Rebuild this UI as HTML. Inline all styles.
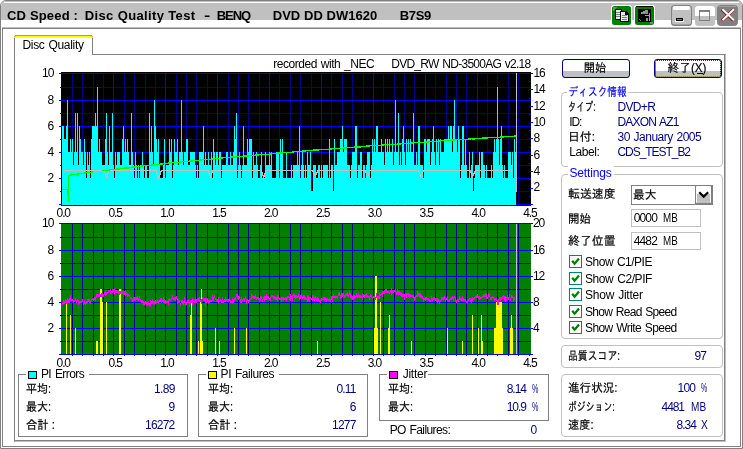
<!DOCTYPE html>
<html lang="ja"><head><meta charset="utf-8"><title>CD Speed : Disc Quality Test</title>
<style>
html,body{margin:0;padding:0;background:#fff;overflow:hidden}
body{width:743px;height:449px;position:relative;font-family:"Liberation Sans","IPAGothic",sans-serif;font-size:12px}
.abs{position:absolute;display:block}
.t{position:absolute;white-space:pre;font-family:"Liberation Sans","IPAGothic",sans-serif}
#tx{position:absolute;left:0;top:0;width:743px;height:449px;will-change:transform;opacity:.999}
</style></head><body>
<div class="abs" style="left:0;top:0;width:743px;height:449px;background:#fff"></div>
<div class="abs" style="left:0;top:0;width:741px;height:447px;border:1px solid #808080;border-radius:6px 6px 0 0;background:#fff"></div>
<div class="abs" style="left:1px;top:1px;width:741px;height:19px;background:#c0c0c0;border-radius:5px 5px 0 0"></div>
<div class="abs" style="left:4px;top:2px;width:735px;height:1px;background:#fff"></div>
<div class="abs" style="left:2px;top:27px;width:739px;height:1px;background:#c0c0c0"></div>
<div class="abs" style="left:2px;top:28px;width:737px;height:417px;border:1px solid #808080"></div>

<svg class="abs" style="left:610px;top:4px" width="46" height="23" viewBox="610 4 46 23" shape-rendering="crispEdges">
<rect x="611" y="5" width="21" height="21" rx="3" fill="#fff" shape-rendering="auto"/>
<rect x="612" y="6" width="19" height="19" rx="2.500" fill="#008000" shape-rendering="auto"/>
<path d="M613 7h4l-4 4z" fill="#808080"/>
<rect x="615" y="9" width="7" height="11" fill="#000"/>
<rect x="616" y="10" width="5" height="9" fill="#e8e8e8"/>
<path d="M616 12h5M616 14h5M616 16h5" stroke="#808080" transform="translate(0,.5)"/>
<path d="M620 11h6l3 3v8h-9z" fill="#000"/>
<path d="M621 12h4v3h3v6h-7z" fill="#e8e8e8"/>
<path d="M622 15h5M622 17h5M622 19h5" stroke="#808080" transform="translate(0,.5)"/>
<rect x="634" y="5" width="21" height="21" rx="3" fill="#fff" shape-rendering="auto"/>
<rect x="635" y="6" width="19" height="19" rx="2.500" fill="#008000" shape-rendering="auto"/>
<rect x="636" y="6" width="17" height="1" fill="#000"/>
<rect x="638" y="9" width="13" height="13" fill="#000"/>
<path d="M641 12h2v-1h2v-1h3v4h-7z" fill="#909090"/>
<rect x="649" y="13" width="1" height="8" fill="#a0a0a0"/>
<rect x="645" y="15" width="4" height="1" fill="#a0a0a0"/>
<rect x="646" y="18" width="2" height="3" fill="#909090"/>
<path d="M639 19h1v1h1v1h-1v-1h-1z" fill="#808080"/>
<path d="M650 22h3v2h-3z" fill="#808080"/>
</svg>
<svg class="abs" style="left:668px;top:3px" width="73" height="25" viewBox="668 3 73 25">
<rect x="671" y="5" width="21" height="21" rx="3.500" fill="#808080"/>
<rect x="672" y="6" width="19" height="18.500" rx="2.500" fill="#c0c0c0"/>
<path d="M673 9v-1.500q0-1.500 1.500-1.500h14q1.500 0 1.500 1.500v1.500l-1 1h-15z" fill="#fff"/>
<rect x="675" y="20" width="9" height="2" fill="#fff"/>
<rect x="676" y="18" width="7" height="3" fill="#000"/>
<rect x="677" y="19" width="5" height="1" fill="#808080"/>
<rect x="695" y="6" width="20" height="20" rx="3" fill="#c0c0c0"/>
<path d="M695 16v-7q0-3 3-3h14q3 0 3 3v7z" fill="#fff"/>
<rect x="699.500" y="10.500" width="10" height="10" fill="#fff" stroke="#808080"/>
<rect x="699" y="10" width="11" height="2" fill="#808080"/>
<rect x="700" y="16" width="9" height="4" fill="#c0c0c0"/>
<rect x="717.500" y="5.500" width="20" height="20" rx="3" fill="#808080" stroke="#808080"/>
<rect x="719" y="6" width="17" height="1" fill="#a0a0a0"/>
<path d="M722 9.500l11.500 11M733.500 9.500l-11.500 11" stroke="#800000" stroke-width="3"/>
<path d="M722.400 9.200l11.500 11M733.900 9.200l-11.500 11" stroke="#fff" stroke-width="2"/>
</svg>
<div class="abs" style="left:14px;top:54px;width:712px;height:388px;box-sizing:border-box;border:1px solid #c0c0c0;border-top-color:#808080;border-left-color:#808080"></div>
<div class="abs" style="left:14px;top:54px;width:711px;height:387px;box-sizing:border-box;border:1px solid #808080"></div>
<div class="abs" style="left:14px;top:35px;width:79px;height:20px;box-sizing:border-box;border:1px solid #808080;border-bottom:none;border-radius:3px 3px 0 0;background:#fff"></div>
<div class="abs" style="left:14px;top:35px;width:79px;height:3px;background:#ffff00;border-radius:3px 3px 0 0;border-top:1px solid #c0a000;box-sizing:border-box"></div>

<svg class="abs" style="left:0;top:0" width="743" height="449" viewBox="0 0 743 449" shape-rendering="crispEdges"><rect x="61" y="72" width="470" height="134" fill="#000"/>
<path d="M72.5 73V205" stroke="#000090"/>
<path d="M82.5 73V205" stroke="#000090"/>
<path d="M93.5 73V205" stroke="#000090"/>
<path d="M103.5 73V205" stroke="#000090"/>
<path d="M113.5 73V205" stroke="#0000ff"/>
<path d="M124.5 73V205" stroke="#000090"/>
<path d="M134.5 73V205" stroke="#000090"/>
<path d="M145.5 73V205" stroke="#000090"/>
<path d="M155.5 73V205" stroke="#000090"/>
<path d="M165.5 73V205" stroke="#0000ff"/>
<path d="M176.5 73V205" stroke="#000090"/>
<path d="M186.5 73V205" stroke="#000090"/>
<path d="M196.5 73V205" stroke="#000090"/>
<path d="M207.5 73V205" stroke="#000090"/>
<path d="M217.5 73V205" stroke="#0000ff"/>
<path d="M228.5 73V205" stroke="#000090"/>
<path d="M238.5 73V205" stroke="#000090"/>
<path d="M248.5 73V205" stroke="#000090"/>
<path d="M259.5 73V205" stroke="#000090"/>
<path d="M269.5 73V205" stroke="#0000ff"/>
<path d="M279.5 73V205" stroke="#000090"/>
<path d="M290.5 73V205" stroke="#000090"/>
<path d="M300.5 73V205" stroke="#000090"/>
<path d="M311.5 73V205" stroke="#000090"/>
<path d="M321.5 73V205" stroke="#0000ff"/>
<path d="M331.5 73V205" stroke="#000090"/>
<path d="M342.5 73V205" stroke="#000090"/>
<path d="M352.5 73V205" stroke="#000090"/>
<path d="M363.5 73V205" stroke="#000090"/>
<path d="M373.5 73V205" stroke="#0000ff"/>
<path d="M383.5 73V205" stroke="#000090"/>
<path d="M394.5 73V205" stroke="#000090"/>
<path d="M404.5 73V205" stroke="#000090"/>
<path d="M414.5 73V205" stroke="#000090"/>
<path d="M425.5 73V205" stroke="#0000ff"/>
<path d="M435.5 73V205" stroke="#000090"/>
<path d="M446.5 73V205" stroke="#000090"/>
<path d="M456.5 73V205" stroke="#000090"/>
<path d="M466.5 73V205" stroke="#000090"/>
<path d="M477.5 73V205" stroke="#0000ff"/>
<path d="M487.5 73V205" stroke="#000090"/>
<path d="M497.5 73V205" stroke="#000090"/>
<path d="M508.5 73V205" stroke="#000090"/>
<path d="M518.5 73V205" stroke="#000090"/>
<path d="M59 204.5H531" stroke="#0000ff"/>
<path d="M60 191.5H531" stroke="#000090"/>
<path d="M59 178.5H531" stroke="#0000ff"/>
<path d="M60 165.5H531" stroke="#000090"/>
<path d="M59 152.5H531" stroke="#0000ff"/>
<path d="M60 139.5H531" stroke="#000090"/>
<path d="M59 126.5H531" stroke="#0000ff"/>
<path d="M60 113.5H531" stroke="#000090"/>
<path d="M59 100.5H531" stroke="#0000ff"/>
<path d="M60 87.5H531" stroke="#000090"/>
<path d="M59 73.5H531" stroke="#0000ff"/>
<path d="M62 126H64V205H62zM64 139H66V205H64zM66 126H67V205H66zM67 100H68V205H67zM68 152H70V205H68zM70 139H71V205H70zM71 152H72V205H71zM72 139H73V205H72zM73 165H74V205H73zM74 152H75V205H74zM75 113H76V205H75zM76 152H77V205H76zM77 113H78V205H77zM78 165H79V205H78zM79 126H80V205H79zM80 139H81V205H80zM81 152H83V205H81zM83 165H84V205H83zM84 139H85V205H84zM85 152H86V205H85zM86 178H87V205H86zM87 152H88V205H87zM88 165H89V205H88zM89 152H90V205H89zM90 178H91V205H90zM91 139H92V205H91zM92 126H95V205H92zM95 113H96V205H95zM96 126H97V205H96zM97 87H98V205H97zM98 152H99V205H98zM99 139H100V205H99zM100 152H102V205H100zM102 165H105V205H102zM105 139H106V205H105zM106 113H107V205H106zM107 152H108V205H107zM108 165H109V205H108zM109 126H110V205H109zM110 152H112V205H110zM112 113H113V205H112zM113 165H114V205H113zM114 178H115V205H114zM115 152H116V205H115zM116 165H117V205H116zM117 152H120V205H117zM120 165H122V205H120zM122 139H123V205H122zM123 126H124V205H123zM124 152H125V205H124zM125 139H126V205H125zM126 152H127V205H126zM127 139H128V205H127zM128 152H129V205H128zM129 165H131V205H129zM131 113H132V205H131zM132 152H133V205H132zM133 165H134V205H133zM134 178H135V205H134zM135 152H136V205H135zM136 165H137V205H136zM137 178H138V205H137zM138 165H139V205H138zM139 178H140V205H139zM140 165H142V205H140zM142 152H143V205H142zM143 165H144V205H143zM144 178H145V205H144zM145 165H147V205H145zM147 178H149V205H147zM149 113H150V205H149zM150 152H151V205H150zM151 126H152V205H151zM152 152H153V205H152zM153 165H154V205H153zM154 100H155V205H154zM155 126H156V205H155zM156 139H157V205H156zM157 152H158V205H157zM158 139H159V205H158zM159 165H160V205H159zM160 178H163V205H160zM163 165H164V205H163zM164 139H165V205H164zM165 178H166V205H165zM166 165H169V205H166zM169 139H170V205H169zM170 152H171V205H170zM171 139H172V205H171zM172 178H173V205H172zM173 165H174V205H173zM174 139H175V205H174zM175 152H177V205H175zM177 139H178V205H177zM178 165H179V205H178zM179 152H181V205H179zM181 100H182V205H181zM182 152H183V205H182zM183 165H184V205H183zM184 152H186V205H184zM186 139H188V205H186zM188 165H190V205H188zM190 152H195V205H190zM195 165H196V205H195zM196 178H197V205H196zM197 165H198V205H197zM198 178H199V205H198zM199 152H203V205H199zM203 126H204V205H203zM204 165H205V205H204zM205 152H206V205H205zM206 165H208V205H206zM208 152H209V205H208zM209 165H211V205H209zM211 152H212V205H211zM212 178H213V205H212zM213 139H214V205H213zM214 152H215V205H214zM215 165H216V205H215zM216 152H218V205H216zM218 165H219V205H218zM219 152H221V205H219zM221 178H222V205H221zM222 165H226V205H222zM226 152H228V205H226zM228 165H230V205H228zM230 152H231V205H230zM231 165H233V205H231zM233 152H234V205H233zM234 126H235V205H234zM235 139H236V205H235zM236 113H237V205H236zM237 178H238V205H237zM238 165H239V205H238zM239 152H240V205H239zM240 165H241V205H240zM241 178H242V205H241zM242 165H243V205H242zM243 126H244V205H243zM244 165H247V205H244zM247 139H248V205H247zM248 152H249V205H248zM249 139H252V205H249zM252 178H253V205H252zM253 152H254V205H253zM254 165H256V205H254zM256 152H257V205H256zM257 165H258V205H257zM258 178H260V205H258zM260 165H261V205H260zM261 152H262V205H261zM262 178H265V205H262zM265 152H266V205H265zM266 165H269V205H266zM269 152H270V205H269zM270 165H271V205H270zM271 152H272V205H271zM272 178H276V205H272zM276 152H279V205H276zM279 178H280V205H279zM280 139H281V205H280zM281 152H282V205H281zM282 139H283V205H282zM283 178H286V205H283zM286 152H287V205H286zM287 178H291V205H287zM291 165H292V205H291zM292 178H293V205H292zM293 165H297V205H293zM297 152H298V205H297zM298 165H299V205H298zM299 126H300V205H299zM300 178H301V205H300zM301 165H302V205H301zM302 152H303V205H302zM303 165H304V205H303zM304 178H305V205H304zM305 165H306V205H305zM306 178H307V205H306zM307 152H308V205H307zM308 165H310V205H308zM310 152H311V205H310zM311 191H313V205H311zM313 165H316V205H313zM316 178H318V205H316zM318 165H320V205H318zM320 178H321V205H320zM321 165H322V205H321zM322 178H323V205H322zM323 165H328V205H323zM328 178H329V205H328zM329 139H330V205H329zM330 178H331V205H330zM331 165H333V205H331zM333 191H334V205H333zM334 139H335V205H334zM335 165H337V205H335zM337 152H340V205H337zM340 139H342V205H340zM342 126H343V205H342zM343 152H344V205H343zM344 139H347V205H344zM347 165H350V205H347zM350 178H351V205H350zM351 165H352V205H351zM352 152H355V205H352zM355 126H357V205H355zM357 178H358V205H357zM358 165H360V205H358zM360 152H362V205H360zM362 178H363V205H362zM363 165H365V205H363zM365 178H366V205H365zM366 165H367V205H366zM367 152H370V205H367zM370 178H371V205H370zM371 165H372V205H371zM372 139H373V205H372zM373 152H374V205H373zM374 139H375V205H374zM375 152H376V205H375zM376 126H378V205H376zM378 152H381V205H378zM381 139H382V205H381zM382 152H384V205H382zM384 165H385V205H384zM385 139H386V205H385zM386 152H387V205H386zM387 139H388V205H387zM388 152H389V205H388zM389 139H390V205H389zM390 152H392V205H390zM392 139H393V205H392zM393 165H394V205H393zM394 152H395V205H394zM395 100H396V205H395zM396 152H398V205H396zM398 113H399V205H398zM399 165H400V205H399zM400 152H401V205H400zM401 165H402V205H401zM402 139H403V205H402zM403 126H404V205H403zM404 152H405V205H404zM405 165H406V205H405zM406 139H407V205H406zM407 152H408V205H407zM408 139H409V205H408zM409 152H410V205H409zM410 139H411V205H410zM411 152H413V205H411zM413 113H414V205H413zM414 165H416V205H414zM416 152H417V205H416zM417 165H418V205H417zM418 126H420V205H418zM420 165H423V205H420zM423 178H424V205H423zM424 139H426V205H424zM426 152H427V205H426zM427 139H430V205H427zM430 165H431V205H430zM431 152H432V205H431zM432 139H433V205H432zM433 126H434V205H433zM434 152H435V205H434zM435 165H436V205H435zM436 139H437V205H436zM437 152H438V205H437zM438 139H439V205H438zM439 165H440V205H439zM440 139H441V205H440zM441 152H444V205H441zM444 139H448V205H444zM448 126H449V205H448zM449 139H450V205H449zM450 126H452V205H450zM452 152H453V205H452zM453 126H454V205H453zM454 100H455V205H454zM455 139H457V205H455zM457 152H458V205H457zM458 126H459V205H458zM459 139H460V205H459zM460 178H461V205H460zM461 165H462V205H461zM462 126H464V205H462zM464 165H465V205H464zM465 139H466V205H465zM466 165H467V205H466zM467 178H469V205H467zM469 152H470V205H469zM470 178H471V205H470zM471 165H472V205H471zM472 152H473V205H472zM473 191H474V205H473zM474 178H475V205H474zM475 165H479V205H475zM479 152H480V205H479zM480 178H481V205H480zM481 152H483V205H481zM483 165H485V205H483zM485 178H486V205H485zM486 165H487V205H486zM487 178H491V205H487zM491 165H492V205H491zM492 178H493V205H492zM493 152H494V205H493zM494 139H495V205H494zM495 152H496V205H495zM496 139H497V205H496zM497 87H498V205H497zM498 139H499V205H498zM499 165H500V205H499zM500 139H501V205H500zM501 126H502V205H501zM502 165H503V205H502zM503 178H504V205H503zM504 165H505V205H504zM505 178H508V205H505zM508 152H511V205H508zM511 165H512V205H511zM512 152H513V205H512zM513 178H514V205H513zM514 139H515V205H514zM515 152H516V205H515z" fill="#00ffff"/>
<path d="M61.5 72V206M61 205.5H531" stroke="#000"/>
<rect x="62" y="205" width="1" height="1" fill="#0000ff"/>
<rect x="72" y="205" width="1" height="1" fill="#0000ff"/>
<rect x="82" y="205" width="1" height="1" fill="#0000ff"/>
<rect x="93" y="205" width="1" height="1" fill="#0000ff"/>
<rect x="103" y="205" width="1" height="1" fill="#0000ff"/>
<rect x="113" y="205" width="1" height="1" fill="#0000ff"/>
<rect x="124" y="205" width="1" height="1" fill="#0000ff"/>
<rect x="134" y="205" width="1" height="1" fill="#0000ff"/>
<rect x="145" y="205" width="1" height="1" fill="#0000ff"/>
<rect x="155" y="205" width="1" height="1" fill="#0000ff"/>
<rect x="165" y="205" width="1" height="1" fill="#0000ff"/>
<rect x="176" y="205" width="1" height="1" fill="#0000ff"/>
<rect x="186" y="205" width="1" height="1" fill="#0000ff"/>
<rect x="196" y="205" width="1" height="1" fill="#0000ff"/>
<rect x="207" y="205" width="1" height="1" fill="#0000ff"/>
<rect x="217" y="205" width="1" height="1" fill="#0000ff"/>
<rect x="228" y="205" width="1" height="1" fill="#0000ff"/>
<rect x="238" y="205" width="1" height="1" fill="#0000ff"/>
<rect x="248" y="205" width="1" height="1" fill="#0000ff"/>
<rect x="259" y="205" width="1" height="1" fill="#0000ff"/>
<rect x="269" y="205" width="1" height="1" fill="#0000ff"/>
<rect x="279" y="205" width="1" height="1" fill="#0000ff"/>
<rect x="290" y="205" width="1" height="1" fill="#0000ff"/>
<rect x="300" y="205" width="1" height="1" fill="#0000ff"/>
<rect x="311" y="205" width="1" height="1" fill="#0000ff"/>
<rect x="321" y="205" width="1" height="1" fill="#0000ff"/>
<rect x="331" y="205" width="1" height="1" fill="#0000ff"/>
<rect x="342" y="205" width="1" height="1" fill="#0000ff"/>
<rect x="352" y="205" width="1" height="1" fill="#0000ff"/>
<rect x="363" y="205" width="1" height="1" fill="#0000ff"/>
<rect x="373" y="205" width="1" height="1" fill="#0000ff"/>
<rect x="383" y="205" width="1" height="1" fill="#0000ff"/>
<rect x="394" y="205" width="1" height="1" fill="#0000ff"/>
<rect x="404" y="205" width="1" height="1" fill="#0000ff"/>
<rect x="414" y="205" width="1" height="1" fill="#0000ff"/>
<rect x="425" y="205" width="1" height="1" fill="#0000ff"/>
<rect x="435" y="205" width="1" height="1" fill="#0000ff"/>
<rect x="446" y="205" width="1" height="1" fill="#0000ff"/>
<rect x="456" y="205" width="1" height="1" fill="#0000ff"/>
<rect x="466" y="205" width="1" height="1" fill="#0000ff"/>
<rect x="477" y="205" width="1" height="1" fill="#0000ff"/>
<rect x="487" y="205" width="1" height="1" fill="#0000ff"/>
<rect x="497" y="205" width="1" height="1" fill="#0000ff"/>
<rect x="508" y="205" width="1" height="1" fill="#0000ff"/>
<rect x="518" y="205" width="1" height="1" fill="#0000ff"/>
<rect x="529" y="205" width="1" height="1" fill="#0000ff"/>
<rect x="59" y="204" width="3" height="1" fill="#0000ff"/>
<rect x="60" y="191" width="2" height="1" fill="#0000ff"/>
<rect x="59" y="178" width="3" height="1" fill="#0000ff"/>
<rect x="60" y="165" width="2" height="1" fill="#0000ff"/>
<rect x="59" y="152" width="3" height="1" fill="#0000ff"/>
<rect x="60" y="139" width="2" height="1" fill="#0000ff"/>
<rect x="59" y="126" width="3" height="1" fill="#0000ff"/>
<rect x="60" y="113" width="2" height="1" fill="#0000ff"/>
<rect x="59" y="100" width="3" height="1" fill="#0000ff"/>
<rect x="60" y="87" width="2" height="1" fill="#0000ff"/>
<rect x="59" y="73" width="3" height="1" fill="#0000ff"/>
<rect x="529" y="204" width="4" height="1" fill="#0000ff"/>
<rect x="529" y="196" width="2" height="1" fill="#0000ff"/>
<rect x="529" y="188" width="4" height="1" fill="#0000ff"/>
<rect x="529" y="179" width="2" height="1" fill="#0000ff"/>
<rect x="529" y="171" width="4" height="1" fill="#0000ff"/>
<rect x="529" y="163" width="2" height="1" fill="#0000ff"/>
<rect x="529" y="155" width="4" height="1" fill="#0000ff"/>
<rect x="529" y="147" width="2" height="1" fill="#0000ff"/>
<rect x="529" y="138" width="4" height="1" fill="#0000ff"/>
<rect x="529" y="130" width="2" height="1" fill="#0000ff"/>
<rect x="529" y="122" width="4" height="1" fill="#0000ff"/>
<rect x="529" y="114" width="2" height="1" fill="#0000ff"/>
<rect x="529" y="106" width="4" height="1" fill="#0000ff"/>
<rect x="529" y="98" width="2" height="1" fill="#0000ff"/>
<rect x="529" y="89" width="4" height="1" fill="#0000ff"/>
<rect x="529" y="81" width="2" height="1" fill="#0000ff"/>
<rect x="529" y="73" width="4" height="1" fill="#0000ff"/>
<polyline fill="none" stroke="#c0c0c0" stroke-width="1.2" points="63.5,170.5 104.1,170.5 106.6,177.5 109.1,170.5 156.2,170.5 158.7,178.5 161.2,170.5 207.9,170.5 210.4,176.5 212.9,170.5 261.2,170.5 263.7,177.5 266.2,170.5 312.7,170.5 315.2,176.5 317.7,170.5 365.1,170.5 367.6,176.5 370.1,170.5 418.5,170.5 421.0,176.5 423.5,170.5 470.3,170.5 472.8,176.5 475.3,170.5 512.0,170.5"/>
<polyline fill="none" stroke="#00ff00" stroke-width="1.3" points="62.0,189.5 67.5,189.5 68.0,194.0 68.5,200.5 68.6,175.5 69.0,175.3 72.0,174.8 75.0,174.6 78.0,173.9 81.0,173.7 84.0,173.2 87.0,172.6 90.0,172.5 93.0,171.8"/>
<polyline fill="none" stroke="#00ff00" stroke-width="1.3" points="102.0,170.7 105.0,170.5 108.0,170.3 111.0,169.6 114.0,169.3 117.0,169.1 120.0,168.9 123.0,168.4 126.0,167.9 129.0,167.9 132.0,167.1 135.0,167.1 138.0,166.5 141.0,166.1 144.0,165.8 147.0,165.5 150.0,165.4 153.0,164.8 156.0,164.7 159.0,164.4 162.0,163.9 165.0,163.7 168.0,163.2 171.0,162.8 174.0,162.6 177.0,162.5 180.0,162.1 183.0,161.8 186.0,161.6 189.0,161.2 192.0,160.9 195.0,160.8 198.0,160.5 201.0,159.9 204.0,159.8 207.0,159.5 210.0,159.4 213.0,159.1 216.0,158.5 219.0,158.6 222.0,157.9 225.0,157.8 228.0,157.7 231.0,157.1 234.0,157.0 237.0,156.5 240.0,156.6 243.0,156.3 246.0,156.0 249.0,155.9 252.0,155.3 255.0,155.2 258.0,154.9 261.0,154.7 264.0,154.4 267.0,154.3 270.0,154.1 273.0,153.6 276.0,153.4 279.0,152.9 282.0,153.0 285.0,152.7 288.0,152.6 291.0,152.3 294.0,151.8 297.0,151.6 300.0,151.5 303.0,150.9 306.0,150.9 309.0,150.5 312.0,150.2 315.0,150.0 318.0,150.1 321.0,149.5 324.0,149.4 327.0,149.2 330.0,149.2 333.0,148.6 336.0,148.5 339.0,148.4 342.0,148.3 345.0,148.0 348.0,147.8 351.0,147.3 354.0,147.2 357.0,146.9 360.0,146.9 363.0,146.8 366.0,146.1 369.0,145.9 372.0,145.7 375.0,145.5 378.0,145.4 381.0,145.3 384.0,144.9 387.0,144.5 390.0,144.5 393.0,144.3 396.0,144.2 399.0,144.1 402.0,143.8 405.0,143.5 408.0,143.3 411.0,143.2 414.0,142.6 417.0,142.9 420.0,142.6 423.0,142.4 426.0,142.2 429.0,141.8 432.0,141.6 435.0,141.2 438.0,141.3 441.0,140.8 444.0,140.6 447.0,140.5 450.0,140.2 453.0,140.1 456.0,139.8 459.0,139.6 462.0,139.4 465.0,139.2 468.0,139.2 471.0,138.8 474.0,139.0 477.0,138.7 480.0,138.3 483.0,138.1 486.0,138.0 489.0,137.8 492.0,137.5 495.0,137.6 498.0,137.5 501.0,137.1 504.0,136.9 507.0,136.5 510.0,136.3 513.0,136.2 516.0,136.0"/>
<rect x="516" y="73" width="1" height="119" fill="#c0c0c0"/></svg>
<svg class="abs" style="left:0;top:0" width="743" height="449" viewBox="0 0 743 449" shape-rendering="crispEdges"><rect x="61" y="223" width="470" height="132" fill="#008000"/>
<path d="M72.5 223V355" stroke="#000090"/>
<path d="M82.5 223V355" stroke="#000090"/>
<path d="M93.5 223V355" stroke="#000090"/>
<path d="M103.5 223V355" stroke="#000090"/>
<path d="M113.5 223V355" stroke="#0000ff"/>
<path d="M124.5 223V355" stroke="#000090"/>
<path d="M134.5 223V355" stroke="#000090"/>
<path d="M145.5 223V355" stroke="#000090"/>
<path d="M155.5 223V355" stroke="#000090"/>
<path d="M165.5 223V355" stroke="#0000ff"/>
<path d="M176.5 223V355" stroke="#000090"/>
<path d="M186.5 223V355" stroke="#000090"/>
<path d="M196.5 223V355" stroke="#000090"/>
<path d="M207.5 223V355" stroke="#000090"/>
<path d="M217.5 223V355" stroke="#0000ff"/>
<path d="M228.5 223V355" stroke="#000090"/>
<path d="M238.5 223V355" stroke="#000090"/>
<path d="M248.5 223V355" stroke="#000090"/>
<path d="M259.5 223V355" stroke="#000090"/>
<path d="M269.5 223V355" stroke="#0000ff"/>
<path d="M279.5 223V355" stroke="#000090"/>
<path d="M290.5 223V355" stroke="#000090"/>
<path d="M300.5 223V355" stroke="#000090"/>
<path d="M311.5 223V355" stroke="#000090"/>
<path d="M321.5 223V355" stroke="#0000ff"/>
<path d="M331.5 223V355" stroke="#000090"/>
<path d="M342.5 223V355" stroke="#000090"/>
<path d="M352.5 223V355" stroke="#000090"/>
<path d="M363.5 223V355" stroke="#000090"/>
<path d="M373.5 223V355" stroke="#0000ff"/>
<path d="M383.5 223V355" stroke="#000090"/>
<path d="M394.5 223V355" stroke="#000090"/>
<path d="M404.5 223V355" stroke="#000090"/>
<path d="M414.5 223V355" stroke="#000090"/>
<path d="M425.5 223V355" stroke="#0000ff"/>
<path d="M435.5 223V355" stroke="#000090"/>
<path d="M446.5 223V355" stroke="#000090"/>
<path d="M456.5 223V355" stroke="#000090"/>
<path d="M466.5 223V355" stroke="#000090"/>
<path d="M477.5 223V355" stroke="#0000ff"/>
<path d="M487.5 223V355" stroke="#000090"/>
<path d="M497.5 223V355" stroke="#000090"/>
<path d="M508.5 223V355" stroke="#000090"/>
<path d="M518.5 223V355" stroke="#000090"/>
<path d="M59 354.5H531" stroke="#0000ff"/>
<path d="M60 341.5H531" stroke="#000090"/>
<path d="M59 328.5H531" stroke="#0000ff"/>
<path d="M60 315.5H531" stroke="#000090"/>
<path d="M59 302.5H531" stroke="#0000ff"/>
<path d="M60 289.5H531" stroke="#000090"/>
<path d="M59 276.5H531" stroke="#0000ff"/>
<path d="M60 263.5H531" stroke="#000090"/>
<path d="M59 250.5H531" stroke="#0000ff"/>
<path d="M60 237.5H531" stroke="#000090"/>
<path d="M59 223.5H531" stroke="#0000ff"/>
<rect x="529" y="354" width="4" height="1" fill="#0000ff"/>
<rect x="529" y="341" width="2" height="1" fill="#0000ff"/>
<rect x="529" y="328" width="4" height="1" fill="#0000ff"/>
<rect x="529" y="315" width="2" height="1" fill="#0000ff"/>
<rect x="529" y="302" width="4" height="1" fill="#0000ff"/>
<rect x="529" y="289" width="2" height="1" fill="#0000ff"/>
<rect x="529" y="276" width="4" height="1" fill="#0000ff"/>
<rect x="529" y="263" width="2" height="1" fill="#0000ff"/>
<rect x="529" y="250" width="4" height="1" fill="#0000ff"/>
<rect x="529" y="237" width="2" height="1" fill="#0000ff"/>
<rect x="529" y="223" width="4" height="1" fill="#0000ff"/>
<path d="M66 302h1V354h-1zM70 315h1V354h-1zM75 328h1V354h-1zM96 341h1V354h-1zM97 341h1V354h-1zM100 289h1V354h-1zM101 289h1V354h-1zM102 302h1V354h-1zM106 302h1V354h-1zM119 289h1V354h-1zM120 289h1V354h-1zM190 315h1V354h-1zM191 302h1V354h-1zM198 341h1V354h-1zM200 302h1V354h-1zM201 289h1V354h-1zM202 341h1V354h-1zM215 328h1V354h-1zM219 341h1V354h-1zM234 328h1V354h-1zM246 328h1V354h-1zM317 341h1V354h-1zM374 328h1V354h-1zM375 276h1V354h-1zM376 276h1V354h-1zM377 328h1V354h-1zM380 302h1V354h-1zM388 328h1V354h-1zM389 315h1V354h-1zM411 341h1V354h-1zM447 328h1V354h-1zM462 341h1V354h-1zM472 315h1V354h-1zM478 328h1V354h-1zM481 315h1V354h-1zM482 341h1V354h-1zM494 328h1V354h-1zM495 328h1V354h-1zM496 302h1V354h-1zM497 302h1V354h-1zM498 302h1V354h-1zM499 302h1V354h-1zM500 302h1V354h-1zM501 302h1V354h-1zM502 328h1V354h-1zM510 328h1V354h-1zM511 315h1V354h-1zM512 328h1V354h-1z" fill="#ffff00"/>
<rect x="516" y="224" width="1" height="130" fill="#c0c0c0"/>
<rect x="72" y="355" width="1" height="1" fill="#000090"/>
<rect x="82" y="355" width="1" height="1" fill="#000090"/>
<rect x="93" y="355" width="1" height="1" fill="#000090"/>
<rect x="103" y="355" width="1" height="1" fill="#000090"/>
<rect x="113" y="355" width="1" height="1" fill="#0000ff"/>
<rect x="124" y="355" width="1" height="1" fill="#000090"/>
<rect x="134" y="355" width="1" height="1" fill="#000090"/>
<rect x="145" y="355" width="1" height="1" fill="#000090"/>
<rect x="155" y="355" width="1" height="1" fill="#000090"/>
<rect x="165" y="355" width="1" height="1" fill="#0000ff"/>
<rect x="176" y="355" width="1" height="1" fill="#000090"/>
<rect x="186" y="355" width="1" height="1" fill="#000090"/>
<rect x="196" y="355" width="1" height="1" fill="#000090"/>
<rect x="207" y="355" width="1" height="1" fill="#000090"/>
<rect x="217" y="355" width="1" height="1" fill="#0000ff"/>
<rect x="228" y="355" width="1" height="1" fill="#000090"/>
<rect x="238" y="355" width="1" height="1" fill="#000090"/>
<rect x="248" y="355" width="1" height="1" fill="#000090"/>
<rect x="259" y="355" width="1" height="1" fill="#000090"/>
<rect x="269" y="355" width="1" height="1" fill="#0000ff"/>
<rect x="279" y="355" width="1" height="1" fill="#000090"/>
<rect x="290" y="355" width="1" height="1" fill="#000090"/>
<rect x="300" y="355" width="1" height="1" fill="#000090"/>
<rect x="311" y="355" width="1" height="1" fill="#000090"/>
<rect x="321" y="355" width="1" height="1" fill="#0000ff"/>
<rect x="331" y="355" width="1" height="1" fill="#000090"/>
<rect x="342" y="355" width="1" height="1" fill="#000090"/>
<rect x="352" y="355" width="1" height="1" fill="#000090"/>
<rect x="363" y="355" width="1" height="1" fill="#000090"/>
<rect x="373" y="355" width="1" height="1" fill="#0000ff"/>
<rect x="383" y="355" width="1" height="1" fill="#000090"/>
<rect x="394" y="355" width="1" height="1" fill="#000090"/>
<rect x="404" y="355" width="1" height="1" fill="#000090"/>
<rect x="414" y="355" width="1" height="1" fill="#000090"/>
<rect x="425" y="355" width="1" height="1" fill="#0000ff"/>
<rect x="435" y="355" width="1" height="1" fill="#000090"/>
<rect x="446" y="355" width="1" height="1" fill="#000090"/>
<rect x="456" y="355" width="1" height="1" fill="#000090"/>
<rect x="466" y="355" width="1" height="1" fill="#000090"/>
<rect x="477" y="355" width="1" height="1" fill="#0000ff"/>
<rect x="487" y="355" width="1" height="1" fill="#000090"/>
<rect x="497" y="355" width="1" height="1" fill="#000090"/>
<rect x="508" y="355" width="1" height="1" fill="#000090"/>
<rect x="518" y="355" width="1" height="1" fill="#000090"/>
<rect x="529" y="355" width="1" height="1" fill="#0000ff"/></svg>
<svg class="abs" style="left:0;top:0" width="743" height="449" viewBox="0 0 743 449" shape-rendering="crispEdges"><path fill="#ff00ff" d="M62 302h1V305h-1zM63 300h1V304h-1zM64 301h1V304h-1zM65 299h1V303h-1zM66 300h1V304h-1zM67 298h1V304h-1zM68 299h1V303h-1zM69 298h1V303h-1zM70 295h1V301h-1zM71 299h1V301h-1zM72 299h1V301h-1zM73 300h1V303h-1zM74 300h1V302h-1zM75 298h1V301h-1zM76 300h1V303h-1zM77 299h1V301h-1zM78 300h1V305h-1zM79 301h1V304h-1zM80 301h1V303h-1zM81 301h1V303h-1zM82 299h1V302h-1zM83 302h1V305h-1zM84 300h1V304h-1zM85 302h1V305h-1zM86 301h1V304h-1zM87 299h1V303h-1zM88 299h1V302h-1zM89 299h1V303h-1zM90 301h1V304h-1zM91 299h1V301h-1zM92 298h1V300h-1zM93 298h1V301h-1zM94 297h1V300h-1zM95 297h1V301h-1zM96 294h1V298h-1zM97 294h1V296h-1zM98 294h1V297h-1zM99 293h1V297h-1zM100 294h1V297h-1zM101 293h1V297h-1zM102 293h1V297h-1zM103 294h1V297h-1zM104 292h1V295h-1zM105 291h1V296h-1zM106 292h1V295h-1zM107 292h1V294h-1zM108 290h1V293h-1zM109 290h1V292h-1zM110 289h1V294h-1zM111 291h1V294h-1zM112 289h1V293h-1zM113 289h1V292h-1zM114 288h1V295h-1zM115 290h1V293h-1zM116 290h1V293h-1zM117 290h1V293h-1zM118 291h1V294h-1zM119 291h1V295h-1zM120 291h1V294h-1zM121 289h1V295h-1zM122 291h1V294h-1zM123 291h1V295h-1zM124 291h1V295h-1zM125 290h1V296h-1zM126 293h1V295h-1zM127 293h1V297h-1zM128 294h1V296h-1zM129 295h1V297h-1zM130 297h1V299h-1zM131 298h1V300h-1zM132 299h1V302h-1zM133 297h1V301h-1zM134 297h1V301h-1zM135 297h1V301h-1zM136 297h1V300h-1zM137 296h1V300h-1zM138 298h1V301h-1zM139 296h1V300h-1zM140 299h1V302h-1zM141 300h1V303h-1zM142 300h1V303h-1zM143 301h1V305h-1zM144 302h1V305h-1zM145 301h1V304h-1zM146 302h1V306h-1zM147 302h1V306h-1zM148 301h1V305h-1zM149 303h1V306h-1zM150 300h1V307h-1zM151 301h1V304h-1zM152 299h1V304h-1zM153 301h1V304h-1zM154 301h1V305h-1zM155 300h1V304h-1zM156 301h1V303h-1zM157 300h1V303h-1zM158 300h1V304h-1zM159 300h1V302h-1zM160 298h1V302h-1zM161 298h1V303h-1zM162 300h1V302h-1zM163 297h1V303h-1zM164 299h1V303h-1zM165 300h1V304h-1zM166 301h1V303h-1zM167 301h1V303h-1zM168 299h1V305h-1zM169 298h1V301h-1zM170 299h1V301h-1zM171 298h1V300h-1zM172 295h1V299h-1zM173 298h1V300h-1zM174 297h1V300h-1zM175 297h1V301h-1zM176 296h1V299h-1zM177 298h1V304h-1zM178 299h1V303h-1zM179 300h1V303h-1zM180 303h1V306h-1zM181 300h1V303h-1zM182 300h1V304h-1zM183 301h1V305h-1zM184 297h1V303h-1zM185 302h1V306h-1zM186 302h1V305h-1zM187 300h1V303h-1zM188 300h1V303h-1zM189 302h1V307h-1zM190 300h1V304h-1zM191 300h1V303h-1zM192 298h1V305h-1zM193 299h1V302h-1zM194 300h1V303h-1zM195 298h1V303h-1zM196 299h1V303h-1zM197 298h1V301h-1zM198 298h1V301h-1zM199 297h1V302h-1zM200 300h1V302h-1zM201 299h1V304h-1zM202 297h1V299h-1zM203 298h1V301h-1zM204 298h1V301h-1zM205 298h1V305h-1zM206 298h1V303h-1zM207 298h1V302h-1zM208 300h1V304h-1zM209 300h1V303h-1zM210 299h1V302h-1zM211 300h1V302h-1zM212 295h1V301h-1zM213 297h1V301h-1zM214 295h1V298h-1zM215 298h1V300h-1zM216 299h1V302h-1zM217 299h1V302h-1zM218 297h1V304h-1zM219 300h1V302h-1zM220 299h1V301h-1zM221 300h1V303h-1zM222 297h1V303h-1zM223 301h1V303h-1zM224 299h1V302h-1zM225 297h1V302h-1zM226 299h1V301h-1zM227 299h1V302h-1zM228 299h1V302h-1zM229 298h1V301h-1zM230 300h1V303h-1zM231 301h1V303h-1zM232 298h1V304h-1zM233 299h1V303h-1zM234 298h1V301h-1zM235 297h1V300h-1zM236 294h1V297h-1zM237 294h1V299h-1zM238 296h1V300h-1zM239 296h1V299h-1zM240 299h1V303h-1zM241 297h1V303h-1zM242 299h1V301h-1zM243 298h1V301h-1zM244 298h1V302h-1zM245 296h1V299h-1zM246 299h1V304h-1zM247 299h1V301h-1zM248 300h1V303h-1zM249 299h1V302h-1zM250 298h1V300h-1zM251 294h1V299h-1zM252 295h1V298h-1zM253 296h1V299h-1zM254 296h1V299h-1zM255 294h1V298h-1zM256 297h1V300h-1zM257 297h1V299h-1zM258 297h1V300h-1zM259 298h1V302h-1zM260 296h1V301h-1zM261 296h1V299h-1zM262 299h1V302h-1zM263 297h1V300h-1zM264 296h1V301h-1zM265 296h1V300h-1zM266 294h1V300h-1zM267 296h1V299h-1zM268 296h1V299h-1zM269 298h1V301h-1zM270 297h1V301h-1zM271 295h1V297h-1zM272 295h1V297h-1zM273 296h1V299h-1zM274 296h1V299h-1zM275 297h1V300h-1zM276 297h1V300h-1zM277 295h1V302h-1zM278 295h1V299h-1zM279 298h1V300h-1zM280 298h1V300h-1zM281 297h1V302h-1zM282 297h1V300h-1zM283 297h1V301h-1zM284 298h1V300h-1zM285 297h1V300h-1zM286 297h1V301h-1zM287 296h1V299h-1zM288 296h1V298h-1zM289 297h1V300h-1zM290 294h1V301h-1zM291 296h1V299h-1zM292 295h1V301h-1zM293 294h1V296h-1zM294 294h1V298h-1zM295 295h1V299h-1zM296 295h1V298h-1zM297 296h1V298h-1zM298 294h1V298h-1zM299 297h1V300h-1zM300 295h1V299h-1zM301 294h1V298h-1zM302 296h1V299h-1zM303 295h1V298h-1zM304 295h1V300h-1zM305 297h1V299h-1zM306 298h1V300h-1zM307 295h1V302h-1zM308 296h1V301h-1zM309 297h1V302h-1zM310 297h1V299h-1zM311 298h1V300h-1zM312 295h1V301h-1zM313 295h1V300h-1zM314 297h1V301h-1zM315 296h1V300h-1zM316 298h1V301h-1zM317 297h1V302h-1zM318 298h1V301h-1zM319 300h1V302h-1zM320 300h1V303h-1zM321 298h1V301h-1zM322 298h1V300h-1zM323 297h1V300h-1zM324 297h1V301h-1zM325 298h1V300h-1zM326 298h1V302h-1zM327 298h1V300h-1zM328 299h1V301h-1zM329 298h1V301h-1zM330 299h1V302h-1zM331 296h1V300h-1zM332 296h1V302h-1zM333 294h1V298h-1zM334 296h1V298h-1zM335 296h1V299h-1zM336 296h1V298h-1zM337 296h1V299h-1zM338 293h1V296h-1zM339 292h1V296h-1zM340 295h1V299h-1zM341 293h1V298h-1zM342 293h1V297h-1zM343 293h1V296h-1zM344 295h1V298h-1zM345 294h1V297h-1zM346 293h1V296h-1zM347 292h1V296h-1zM348 294h1V297h-1zM349 291h1V295h-1zM350 293h1V298h-1zM351 295h1V299h-1zM352 296h1V300h-1zM353 294h1V300h-1zM354 295h1V299h-1zM355 296h1V298h-1zM356 293h1V297h-1zM357 295h1V298h-1zM358 293h1V297h-1zM359 295h1V298h-1zM360 295h1V298h-1zM361 296h1V298h-1zM362 293h1V300h-1zM363 294h1V297h-1zM364 295h1V298h-1zM365 294h1V297h-1zM366 293h1V297h-1zM367 295h1V298h-1zM368 296h1V298h-1zM369 296h1V300h-1zM370 294h1V297h-1zM371 295h1V298h-1zM372 297h1V299h-1zM373 296h1V298h-1zM374 296h1V298h-1zM375 297h1V300h-1zM376 293h1V298h-1zM377 296h1V299h-1zM378 296h1V299h-1zM379 293h1V299h-1zM380 294h1V296h-1zM381 293h1V295h-1zM382 291h1V297h-1zM383 291h1V294h-1zM384 290h1V294h-1zM385 289h1V293h-1zM386 289h1V293h-1zM387 291h1V293h-1zM388 291h1V293h-1zM389 292h1V294h-1zM390 290h1V293h-1zM391 288h1V295h-1zM392 290h1V294h-1zM393 290h1V293h-1zM394 290h1V292h-1zM395 289h1V292h-1zM396 292h1V295h-1zM397 289h1V294h-1zM398 291h1V295h-1zM399 291h1V295h-1zM400 292h1V296h-1zM401 293h1V297h-1zM402 294h1V297h-1zM403 294h1V297h-1zM404 294h1V300h-1zM405 294h1V296h-1zM406 293h1V298h-1zM407 293h1V295h-1zM408 293h1V297h-1zM409 294h1V298h-1zM410 294h1V297h-1zM411 295h1V297h-1zM412 295h1V298h-1zM413 295h1V298h-1zM414 297h1V301h-1zM415 296h1V300h-1zM416 295h1V297h-1zM417 291h1V297h-1zM418 293h1V296h-1zM419 293h1V297h-1zM420 293h1V298h-1zM421 295h1V298h-1zM422 296h1V299h-1zM423 298h1V302h-1zM424 298h1V300h-1zM425 297h1V301h-1zM426 297h1V300h-1zM427 298h1V300h-1zM428 298h1V301h-1zM429 299h1V302h-1zM430 300h1V302h-1zM431 296h1V301h-1zM432 298h1V301h-1zM433 297h1V300h-1zM434 297h1V300h-1zM435 298h1V301h-1zM436 298h1V302h-1zM437 298h1V303h-1zM438 299h1V302h-1zM439 300h1V304h-1zM440 300h1V302h-1zM441 297h1V301h-1zM442 297h1V300h-1zM443 297h1V300h-1zM444 296h1V299h-1zM445 299h1V302h-1zM446 298h1V300h-1zM447 296h1V301h-1zM448 300h1V302h-1zM449 299h1V302h-1zM450 298h1V300h-1zM451 297h1V300h-1zM452 296h1V299h-1zM453 297h1V301h-1zM454 296h1V298h-1zM455 297h1V302h-1zM456 300h1V303h-1zM457 299h1V301h-1zM458 299h1V302h-1zM459 296h1V300h-1zM460 298h1V300h-1zM461 298h1V301h-1zM462 296h1V301h-1zM463 298h1V301h-1zM464 299h1V301h-1zM465 299h1V302h-1zM466 301h1V303h-1zM467 300h1V303h-1zM468 299h1V301h-1zM469 298h1V301h-1zM470 298h1V302h-1zM471 298h1V303h-1zM472 297h1V301h-1zM473 298h1V300h-1zM474 297h1V299h-1zM475 296h1V298h-1zM476 295h1V298h-1zM477 294h1V298h-1zM478 296h1V299h-1zM479 296h1V300h-1zM480 297h1V299h-1zM481 297h1V299h-1zM482 296h1V298h-1zM483 294h1V297h-1zM484 295h1V297h-1zM485 293h1V297h-1zM486 293h1V299h-1zM487 297h1V299h-1zM488 293h1V297h-1zM489 294h1V297h-1zM490 297h1V300h-1zM491 297h1V300h-1zM492 296h1V298h-1zM493 297h1V299h-1zM494 298h1V301h-1zM495 298h1V300h-1zM496 298h1V301h-1zM497 300h1V305h-1zM498 299h1V305h-1zM499 297h1V300h-1zM500 297h1V301h-1zM501 297h1V300h-1zM502 296h1V299h-1zM503 295h1V297h-1zM504 296h1V301h-1zM505 296h1V302h-1zM506 297h1V301h-1zM507 295h1V299h-1zM508 297h1V300h-1zM509 294h1V298h-1zM510 298h1V301h-1zM511 295h1V298h-1zM512 296h1V298h-1zM513 297h1V302h-1zM514 297h1V300h-1z"/></svg>
<div class="abs" style="left:562px;top:59px;width:68px;height:19px;box-sizing:border-box;border:1px solid #000080;border-radius:3px;background:linear-gradient(#fff 0,#fff 64.700%,#c0c0c0 64.700%)"></div>
<div class="abs" style="left:654px;top:59px;width:68px;height:19px;box-sizing:border-box;border:1px solid #000080;border-radius:3px;background:linear-gradient(#fff 0,#fff 64.700%,#c0c0c0 64.700%)"></div><div class="abs" style="left:655px;top:60px;width:66px;height:17px;box-sizing:border-box;border:1px dotted #000;border-top-color:#c00000;border-bottom-color:#808000;border-radius:2px"></div>
<div class="abs" style="left:697px;top:73px;width:6px;height:1px;background:#000"></div>
<div class="abs" style="left:561px;top:92px;width:162px;height:75px;box-sizing:border-box;border:1px solid #c0c0c0;border-radius:4px;"></div>
<div class="abs" style="left:561px;top:174px;width:162px;height:165px;box-sizing:border-box;border:1px solid #c0c0c0;border-radius:4px;"></div>
<div class="abs" style="left:631px;top:185px;width:82px;height:20px;box-sizing:border-box;border:1px solid #808080;background:#fff"></div>
<svg class="abs" style="left:695px;top:185px" width="18" height="20" viewBox="0 0 18 20"><rect x="0" y="0" width="18" height="20" fill="#808080"/><rect x="1" y="1" width="15" height="17" rx="1" fill="#fff"/><rect x="2" y="9" width="13" height="9" fill="#c0c0c0"/><path d="M4.300 7.300l4.400 4.400 4.400-4.400" fill="none" stroke="#000" stroke-width="2.300"/></svg>
<div class="abs" style="left:631px;top:209px;width:70px;height:18px;box-sizing:border-box;border:1px solid #c0c0c0;background:#fff"></div>
<div class="abs" style="left:631px;top:232px;width:70px;height:18px;box-sizing:border-box;border:1px solid #c0c0c0;background:#fff"></div>
<svg class="abs" style="left:569px;top:255px" width="13" height="13" viewBox="0 0 13 13"><rect x="0.5" y="0.500" width="12" height="12" fill="#fff" stroke="#008080"/><path d="M3.200 5.800L5.600 8.700L10 3.600" fill="none" stroke="#008000" stroke-width="2.300"/></svg>
<svg class="abs" style="left:569px;top:272px" width="13" height="13" viewBox="0 0 13 13"><rect x="0.5" y="0.500" width="12" height="12" fill="#fff" stroke="#008080"/><path d="M3.200 5.800L5.600 8.700L10 3.600" fill="none" stroke="#008000" stroke-width="2.300"/></svg>
<svg class="abs" style="left:569px;top:288px" width="13" height="13" viewBox="0 0 13 13"><rect x="0.5" y="0.500" width="12" height="12" fill="#fff" stroke="#008080"/><path d="M3.200 5.800L5.600 8.700L10 3.600" fill="none" stroke="#008000" stroke-width="2.300"/></svg>
<svg class="abs" style="left:569px;top:305px" width="13" height="13" viewBox="0 0 13 13"><rect x="0.5" y="0.500" width="12" height="12" fill="#fff" stroke="#008080"/><path d="M3.200 5.800L5.600 8.700L10 3.600" fill="none" stroke="#008000" stroke-width="2.300"/></svg>
<svg class="abs" style="left:569px;top:321px" width="13" height="13" viewBox="0 0 13 13"><rect x="0.5" y="0.500" width="12" height="12" fill="#fff" stroke="#008080"/><path d="M3.200 5.800L5.600 8.700L10 3.600" fill="none" stroke="#008000" stroke-width="2.300"/></svg>
<div class="abs" style="left:561px;top:345px;width:162px;height:23px;box-sizing:border-box;border:1px solid #c0c0c0;border-radius:4px;"></div>
<div class="abs" style="left:561px;top:374px;width:162px;height:63px;box-sizing:border-box;border:1px solid #c0c0c0;border-radius:4px;"></div>
<div class="abs" style="left:18px;top:374px;width:170px;height:63px;box-sizing:border-box;border:1px solid #808080;"></div>
<div class="abs" style="left:26px;top:373px;width:63px;height:3px;background:#fff"></div><div class="abs" style="left:28px;top:371px;width:9px;height:8px;box-sizing:border-box;border:1px solid #000;background:#00ffff"></div>
<div class="abs" style="left:198px;top:374px;width:170px;height:63px;box-sizing:border-box;border:1px solid #808080;"></div>
<div class="abs" style="left:206px;top:373px;width:73px;height:3px;background:#fff"></div><div class="abs" style="left:208px;top:371px;width:9px;height:8px;box-sizing:border-box;border:1px solid #000;background:#ffff00"></div>
<div class="abs" style="left:379px;top:374px;width:170px;height:47px;box-sizing:border-box;border:1px solid #808080;"></div>
<div class="abs" style="left:387px;top:373px;width:40.5px;height:3px;background:#fff"></div><div class="abs" style="left:389px;top:371px;width:9px;height:8px;box-sizing:border-box;border:1px solid #000;background:#ff00ff"></div>
<div id="tx">
<div class="t" style="font-size:13px;line-height:15px;color:#000;top:8.1px;font-weight:bold;letter-spacing:0.17px;left:7.0px;">CD Speed :</div>
<div class="t" style="font-size:13px;line-height:15px;color:#000;top:8.1px;font-weight:bold;letter-spacing:0.36px;left:84.8px;">Disc Quality Test</div>
<div class="t" style="font-size:13px;line-height:15px;color:#000;top:8.1px;font-weight:bold;transform:scaleX(1.450);transform-origin:0 50%;left:204.1px;">-</div>
<div class="t" style="font-size:13px;line-height:15px;color:#000;top:8.1px;font-weight:bold;letter-spacing:-1.09px;left:216.8px;">BENQ</div>
<div class="t" style="font-size:13px;line-height:15px;color:#000;top:8.1px;font-weight:bold;letter-spacing:0.05px;left:272.7px;">DVD DD DW1620</div>
<div class="t" style="font-size:13px;line-height:15px;color:#000;top:8.1px;font-weight:bold;letter-spacing:-0.33px;left:399.8px;">B7S9</div>
<div class="t" style="font-size:12px;line-height:14px;color:#000;top:37.6px;letter-spacing:-0.33px;word-spacing:1.0px;left:22.5px;">Disc Quality</div>
<div class="t" style="font-size:12px;line-height:14px;color:#000;top:66.1px;letter-spacing:-0.93px;right:689.6px;">10</div>
<div class="t" style="font-size:12px;line-height:14px;color:#000;top:216.4px;letter-spacing:-0.93px;right:689.6px;">10</div>
<div class="t" style="font-size:12px;line-height:14px;color:#000;top:93.1px;letter-spacing:-1.29px;right:690.0px;">8</div>
<div class="t" style="font-size:12px;line-height:14px;color:#000;top:243.4px;letter-spacing:-1.29px;right:690.0px;">8</div>
<div class="t" style="font-size:12px;line-height:14px;color:#000;top:119.1px;letter-spacing:-1.29px;right:690.0px;">6</div>
<div class="t" style="font-size:12px;line-height:14px;color:#000;top:269.4px;letter-spacing:-1.29px;right:690.0px;">6</div>
<div class="t" style="font-size:12px;line-height:14px;color:#000;top:145.1px;letter-spacing:-1.29px;right:690.0px;">4</div>
<div class="t" style="font-size:12px;line-height:14px;color:#000;top:295.4px;letter-spacing:-1.29px;right:690.0px;">4</div>
<div class="t" style="font-size:12px;line-height:14px;color:#000;top:171.1px;letter-spacing:-1.29px;right:690.0px;">2</div>
<div class="t" style="font-size:12px;line-height:14px;color:#000;top:321.4px;letter-spacing:-1.29px;right:690.0px;">2</div>
<div class="t" style="font-size:12px;line-height:14px;color:#000;top:65.8px;letter-spacing:-1.18px;left:533.4px;">16</div>
<div class="t" style="font-size:12px;line-height:14px;color:#000;top:82.2px;letter-spacing:-1.18px;left:533.4px;">14</div>
<div class="t" style="font-size:12px;line-height:14px;color:#000;top:98.5px;letter-spacing:-1.18px;left:533.4px;">12</div>
<div class="t" style="font-size:12px;line-height:14px;color:#000;top:114.9px;letter-spacing:-1.18px;left:533.4px;">10</div>
<div class="t" style="font-size:12px;line-height:14px;color:#000;top:131.3px;letter-spacing:-1.49px;left:533.4px;">8</div>
<div class="t" style="font-size:12px;line-height:14px;color:#000;top:147.7px;letter-spacing:-1.49px;left:533.4px;">6</div>
<div class="t" style="font-size:12px;line-height:14px;color:#000;top:164.1px;letter-spacing:-1.49px;left:533.4px;">4</div>
<div class="t" style="font-size:12px;line-height:14px;color:#000;top:180.4px;letter-spacing:-1.49px;left:533.4px;">2</div>
<div class="t" style="font-size:12px;line-height:14px;color:#000;top:216.4px;letter-spacing:-1.08px;left:533.0px;">20</div>
<div class="t" style="font-size:12px;line-height:14px;color:#000;top:243.4px;letter-spacing:-1.08px;left:533.0px;">16</div>
<div class="t" style="font-size:12px;line-height:14px;color:#000;top:269.4px;letter-spacing:-1.08px;left:533.0px;">12</div>
<div class="t" style="font-size:12px;line-height:14px;color:#000;top:295.4px;letter-spacing:-1.49px;left:533.0px;">8</div>
<div class="t" style="font-size:12px;line-height:14px;color:#000;top:321.4px;letter-spacing:-1.49px;left:533.0px;">4</div>
<div class="t" style="font-size:12px;line-height:14px;color:#000;top:205.6px;letter-spacing:-1.13px;left:56.6px;">0.0</div>
<div class="t" style="font-size:12px;line-height:14px;color:#000;top:355.8px;letter-spacing:-1.13px;left:56.6px;">0.0</div>
<div class="t" style="font-size:12px;line-height:14px;color:#000;top:205.6px;letter-spacing:-1.13px;left:108.5px;">0.5</div>
<div class="t" style="font-size:12px;line-height:14px;color:#000;top:355.8px;letter-spacing:-1.13px;left:108.5px;">0.5</div>
<div class="t" style="font-size:12px;line-height:14px;color:#000;top:205.6px;letter-spacing:-1.13px;left:160.3px;">1.0</div>
<div class="t" style="font-size:12px;line-height:14px;color:#000;top:355.8px;letter-spacing:-1.13px;left:160.3px;">1.0</div>
<div class="t" style="font-size:12px;line-height:14px;color:#000;top:205.6px;letter-spacing:-1.13px;left:212.2px;">1.5</div>
<div class="t" style="font-size:12px;line-height:14px;color:#000;top:355.8px;letter-spacing:-1.13px;left:212.2px;">1.5</div>
<div class="t" style="font-size:12px;line-height:14px;color:#000;top:205.6px;letter-spacing:-1.13px;left:264.0px;">2.0</div>
<div class="t" style="font-size:12px;line-height:14px;color:#000;top:355.8px;letter-spacing:-1.13px;left:264.0px;">2.0</div>
<div class="t" style="font-size:12px;line-height:14px;color:#000;top:205.6px;letter-spacing:-1.13px;left:315.9px;">2.5</div>
<div class="t" style="font-size:12px;line-height:14px;color:#000;top:355.8px;letter-spacing:-1.13px;left:315.9px;">2.5</div>
<div class="t" style="font-size:12px;line-height:14px;color:#000;top:205.6px;letter-spacing:-1.13px;left:367.7px;">3.0</div>
<div class="t" style="font-size:12px;line-height:14px;color:#000;top:355.8px;letter-spacing:-1.13px;left:367.7px;">3.0</div>
<div class="t" style="font-size:12px;line-height:14px;color:#000;top:205.6px;letter-spacing:-1.13px;left:419.6px;">3.5</div>
<div class="t" style="font-size:12px;line-height:14px;color:#000;top:355.8px;letter-spacing:-1.13px;left:419.6px;">3.5</div>
<div class="t" style="font-size:12px;line-height:14px;color:#000;top:205.6px;letter-spacing:-1.13px;left:471.4px;">4.0</div>
<div class="t" style="font-size:12px;line-height:14px;color:#000;top:355.8px;letter-spacing:-1.13px;left:471.4px;">4.0</div>
<div class="t" style="font-size:12px;line-height:14px;color:#000;top:205.6px;letter-spacing:-1.13px;left:523.2px;">4.5</div>
<div class="t" style="font-size:12px;line-height:14px;color:#000;top:355.8px;letter-spacing:-1.13px;left:523.2px;">4.5</div>
<div class="t" style="font-size:12px;line-height:14px;color:#000;top:56.6px;letter-spacing:-0.47px;word-spacing:1.0px;left:273.3px;">recorded with _NEC</div>
<div class="t" style="font-size:12px;line-height:14px;color:#000;top:56.6px;letter-spacing:-0.72px;word-spacing:1.0px;left:391.2px;">DVD_RW ND-3500AG v2.18</div>
<div class="t" style="font-size:12px;line-height:14px;color:#000;top:60.6px;-webkit-text-stroke:0.2px currentColor;transform:scaleX(0.938);transform-origin:50% 50%;left:583.2px;">開始</div>
<div class="t" style="font-size:12px;line-height:14px;color:#000;top:60.6px;-webkit-text-stroke:0.2px currentColor;transform:scaleX(0.970);transform-origin:50% 50%;left:667.0px;">終了(X)</div>
<div class="t" style="font-size:12px;line-height:14px;color:#0000ff;top:84.6px;-webkit-text-stroke:0.2px currentColor;transform:scaleX(0.806);transform-origin:0 50%;left:568.5px;background:#fff;padding:0 2px;margin-left:-2px;">ディスク情報</div>
<div class="t" style="font-size:12px;line-height:14px;color:#000;top:99.7px;-webkit-text-stroke:0.2px currentColor;transform:scaleX(0.699);transform-origin:0 50%;left:568.3px;">タイプ:</div>
<div class="t" style="font-size:12px;line-height:14px;color:#000080;top:99.7px;letter-spacing:-0.66px;left:617.5px;">DVD+R</div>
<div class="t" style="font-size:12px;line-height:14px;color:#000;top:114.7px;letter-spacing:-1.11px;left:569.3px;">ID:</div>
<div class="t" style="font-size:12px;line-height:14px;color:#000080;top:114.7px;letter-spacing:-0.81px;word-spacing:1.0px;left:617.5px;">DAXON AZ1</div>
<div class="t" style="font-size:12px;line-height:14px;color:#000;top:129.7px;-webkit-text-stroke:0.2px currentColor;transform:scaleX(0.987);transform-origin:0 50%;left:568.3px;">日付:</div>
<div class="t" style="font-size:12px;line-height:14px;color:#000080;top:129.7px;letter-spacing:-0.52px;word-spacing:1.0px;left:617.5px;">30 January 2005</div>
<div class="t" style="font-size:12px;line-height:14px;color:#000;top:144.7px;letter-spacing:-0.45px;left:569.3px;">Label:</div>
<div class="t" style="font-size:12px;line-height:14px;color:#000080;top:144.7px;letter-spacing:-1.05px;left:617.5px;">CDS_TEST_B2</div>
<div class="t" style="font-size:12px;line-height:14px;color:#0000ff;top:166.4px;letter-spacing:-0.17px;left:569.5px;background:#fff;padding:0 2px;margin-left:-2px;">Settings</div>
<div class="t" style="font-size:12px;line-height:14px;color:#000;top:187.4px;-webkit-text-stroke:0.2px currentColor;transform:scaleX(0.990);transform-origin:0 50%;left:567.7px;">転送速度</div>
<div class="t" style="font-size:12px;line-height:14px;color:#000;top:211.8px;-webkit-text-stroke:0.2px currentColor;transform:scaleX(0.958);transform-origin:0 50%;left:567.7px;">開始</div>
<div class="t" style="font-size:12px;line-height:14px;color:#000;top:234.4px;-webkit-text-stroke:0.2px currentColor;transform:scaleX(0.990);transform-origin:0 50%;left:567.7px;">終了位置</div>
<div class="t" style="font-size:12px;line-height:14px;color:#000;top:187.6px;-webkit-text-stroke:0.2px currentColor;transform:scaleX(0.975);transform-origin:0 50%;left:633.4px;">最大</div>
<div class="t" style="font-size:12px;line-height:14px;color:#000;top:210.5px;letter-spacing:-0.85px;left:633.7px;">0000</div>
<div class="t" style="font-size:12px;line-height:14px;color:#000;top:210.5px;transform:scaleX(0.817);transform-origin:0 50%;left:663.4px;">MB</div>
<div class="t" style="font-size:12px;line-height:14px;color:#000;top:233.5px;letter-spacing:-0.85px;left:633.7px;">4482</div>
<div class="t" style="font-size:12px;line-height:14px;color:#000;top:233.5px;transform:scaleX(0.817);transform-origin:0 50%;left:663.4px;">MB</div>
<div class="t" style="font-size:12px;line-height:14px;color:#000;top:254.6px;letter-spacing:-0.49px;word-spacing:1.0px;left:585.0px;">Show C1/PIE</div>
<div class="t" style="font-size:12px;line-height:14px;color:#000;top:271.6px;letter-spacing:-0.43px;word-spacing:1.0px;left:585.0px;">Show C2/PIF</div>
<div class="t" style="font-size:12px;line-height:14px;color:#000;top:287.6px;letter-spacing:-0.24px;word-spacing:1.0px;left:585.0px;">Show Jitter</div>
<div class="t" style="font-size:12px;line-height:14px;color:#000;top:304.6px;letter-spacing:-0.71px;word-spacing:1.0px;left:585.0px;">Show Read Speed</div>
<div class="t" style="font-size:12px;line-height:14px;color:#000;top:320.6px;letter-spacing:-0.60px;word-spacing:1.0px;left:585.0px;">Show Write Speed</div>
<div class="t" style="font-size:12px;line-height:14px;color:#000;top:349.4px;-webkit-text-stroke:0.2px currentColor;transform:scaleX(0.821);transform-origin:0 50%;left:567.7px;">品質スコア:</div>
<div class="t" style="font-size:12px;line-height:14px;color:#000080;top:349.4px;letter-spacing:-0.93px;right:36.9px;">97</div>
<div class="t" style="font-size:12px;line-height:14px;color:#000;top:381.0px;-webkit-text-stroke:0.2px currentColor;transform:scaleX(0.966);transform-origin:0 50%;left:567.7px;">進行状況:</div>
<div class="t" style="font-size:12px;line-height:14px;color:#000;top:400.0px;-webkit-text-stroke:0.2px currentColor;transform:scaleX(0.739);transform-origin:0 50%;left:567.7px;">ポジション:</div>
<div class="t" style="font-size:12px;line-height:14px;color:#000;top:417.6px;-webkit-text-stroke:0.2px currentColor;transform:scaleX(0.933);transform-origin:0 50%;left:567.7px;">速度:</div>
<div class="t" style="font-size:12px;line-height:14px;color:#000080;top:380.6px;letter-spacing:-0.84px;right:47.9px;">100</div>
<div class="t" style="font-size:12px;line-height:14px;color:#000080;top:380.6px;transform:scaleX(0.581);transform-origin:0 50%;left:701.0px;">%</div>
<div class="t" style="font-size:12px;line-height:14px;color:#000080;top:399.7px;letter-spacing:-1.10px;left:661.6px;">4481</div>
<div class="t" style="font-size:12px;line-height:14px;color:#000080;top:399.7px;transform:scaleX(0.839);transform-origin:0 50%;left:690.7px;">MB</div>
<div class="t" style="font-size:12px;line-height:14px;color:#000080;top:417.5px;letter-spacing:-1.01px;left:676.6px;">8.34</div>
<div class="t" style="font-size:12px;line-height:14px;color:#000080;top:417.5px;transform:scaleX(0.848);transform-origin:0 50%;left:700.8px;">X</div>
<div class="t" style="font-size:12px;line-height:14px;color:#000;top:367.2px;letter-spacing:-0.56px;word-spacing:1.0px;left:40.9px;">PI Errors</div>
<div class="t" style="font-size:12px;line-height:14px;color:#000;top:367.2px;letter-spacing:-0.45px;word-spacing:1.0px;left:220.6px;">PI Failures</div>
<div class="t" style="font-size:12px;line-height:14px;color:#000;top:367.2px;letter-spacing:-0.24px;left:402.7px;">Jitter</div>
<div class="t" style="font-size:12px;line-height:14px;color:#000;top:381.8px;-webkit-text-stroke:0.2px currentColor;transform:scaleX(0.914);transform-origin:0 50%;left:26.2px;">平均:</div>
<div class="t" style="font-size:12px;line-height:14px;color:#000080;top:381.8px;letter-spacing:-0.71px;right:568.4px;">1.89</div>
<div class="t" style="font-size:12px;line-height:14px;color:#000;top:400.2px;-webkit-text-stroke:0.2px currentColor;transform:scaleX(0.914);transform-origin:0 50%;left:26.2px;">最大:</div>
<div class="t" style="font-size:12px;line-height:14px;color:#000080;top:400.2px;letter-spacing:-1.29px;right:569.0px;">9</div>
<div class="t" style="font-size:12px;line-height:14px;color:#000;top:418.2px;-webkit-text-stroke:0.2px currentColor;transform:scaleX(0.945);transform-origin:0 50%;left:26.2px;">合計 :</div>
<div class="t" style="font-size:12px;line-height:14px;color:#000080;top:418.2px;letter-spacing:-0.78px;right:568.5px;">16272</div>
<div class="t" style="font-size:12px;line-height:14px;color:#000;top:381.8px;-webkit-text-stroke:0.2px currentColor;transform:scaleX(0.914);transform-origin:0 50%;left:207.7px;">平均:</div>
<div class="t" style="font-size:12px;line-height:14px;color:#000080;top:381.8px;letter-spacing:-0.87px;right:387.5px;">0.11</div>
<div class="t" style="font-size:12px;line-height:14px;color:#000;top:400.2px;-webkit-text-stroke:0.2px currentColor;transform:scaleX(0.914);transform-origin:0 50%;left:207.7px;">最大:</div>
<div class="t" style="font-size:12px;line-height:14px;color:#000080;top:400.2px;letter-spacing:-1.29px;right:387.9px;">6</div>
<div class="t" style="font-size:12px;line-height:14px;color:#000;top:418.2px;-webkit-text-stroke:0.2px currentColor;transform:scaleX(0.945);transform-origin:0 50%;left:207.7px;">合計 :</div>
<div class="t" style="font-size:12px;line-height:14px;color:#000080;top:418.2px;letter-spacing:-0.80px;right:387.4px;">1277</div>
<div class="t" style="font-size:12px;line-height:14px;color:#000;top:381.9px;-webkit-text-stroke:0.2px currentColor;transform:scaleX(0.914);transform-origin:0 50%;left:388.0px;">平均:</div>
<div class="t" style="font-size:12px;line-height:14px;color:#000080;top:381.9px;letter-spacing:-1.01px;right:217.0px;">8.14</div>
<div class="t" style="font-size:12px;line-height:14px;color:#000080;top:381.9px;transform:scaleX(0.600);transform-origin:0 50%;left:531.5px;">%</div>
<div class="t" style="font-size:12px;line-height:14px;color:#000;top:400.2px;-webkit-text-stroke:0.2px currentColor;transform:scaleX(0.914);transform-origin:0 50%;left:388.0px;">最大:</div>
<div class="t" style="font-size:12px;line-height:14px;color:#000080;top:400.1px;letter-spacing:-1.01px;right:217.0px;">10.9</div>
<div class="t" style="font-size:12px;line-height:14px;color:#000080;top:400.1px;transform:scaleX(0.600);transform-origin:0 50%;left:531.5px;">%</div>
<div class="t" style="font-size:12px;line-height:14px;color:#000;top:423.0px;letter-spacing:-0.60px;word-spacing:1.0px;left:389.7px;">PO Failures:</div>
<div class="t" style="font-size:12px;line-height:14px;color:#000080;top:423.0px;letter-spacing:-1.29px;right:207.1px;">0</div>
</div>
</body></html>
